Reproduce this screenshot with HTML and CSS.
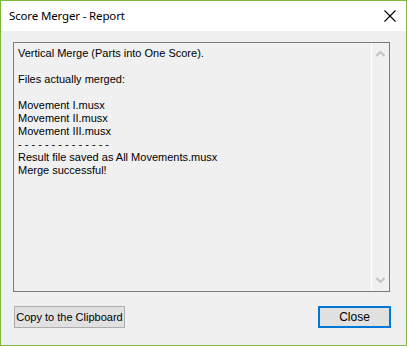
FILE: index.html
```html
<!DOCTYPE html>
<html>
<head>
<meta charset="utf-8">
<link rel="stylesheet" href="styles.css">
</head>
<body>
<div class="window">
  <div class="titlebar">
    <span class="title">Score Merger - Report</span>
    <svg class="close-x" width="12" height="12" viewBox="0 0 12 12"><path d="M0.5 0.5 L11.5 11.5 M11.5 0.5 L0.5 11.5" stroke="#000" stroke-width="1.1" fill="none"/></svg>
  </div>
  <div class="content">
    <div class="report">
      <div class="report-text">
        <div>Vertical Merge (Parts into One Score).</div>
        <div>&nbsp;</div>
        <div>Files actually merged:</div>
        <div>&nbsp;</div>
        <div>Movement I.musx</div>
        <div>Movement II.musx</div>
        <div>Movement III.musx</div>
        <div>- - - - - - - - - - - - - -</div>
        <div>Result file saved as All Movements.musx</div>
        <div>Merge successful!</div>
      </div>
      <div class="scrollbar">
        <svg class="arrow" width="9" height="6" viewBox="0 0 9 6"><path d="M0.5 5 L4.5 1 L8.5 5" stroke="#c2c2c2" stroke-width="2" fill="none"/></svg>
        <svg class="arrow" width="9" height="6" viewBox="0 0 9 6"><path d="M0.5 1 L4.5 5 L8.5 1" stroke="#c2c2c2" stroke-width="2" fill="none"/></svg>
      </div>
    </div>
    <div class="buttons">
      <button class="btn copy">Copy to the Clipboard</button>
      <button class="btn close default">Close</button>
    </div>
  </div>
</div>
</body>
</html>
```
FILE: styles.css
```css
html, body {
  margin: 0;
  padding: 0;
  background: #f0f0f0;
}
.window {
  width: 405px;
  height: 344px;
  border: 1px solid #7db83a;
  background: #f0f0f0;
  display: flex;
  flex-direction: column;
}
.titlebar {
  height: 30px;
  background: #ffffff;
  display: flex;
  align-items: center;
  justify-content: space-between;
  padding: 0 10px 0 8px;
}
.title {
  font-family: "Noto Sans", "Open Sans", sans-serif;
  font-size: 11.5px;
  letter-spacing: -0.15px;
  color: #000;
  margin-top: -1px;
}
.close-x {
  display: block;
  margin-top: -1px;
}
.content {
  padding: 11px 16px 0 12px;
  display: flex;
  flex-direction: column;
}
.report {
  height: 248px;
  border: 1px solid #7a7a7a;
  display: flex;
  background: #f0f0f0;
}
.report-text {
  flex: 1;
  padding: 4px 4px;
  font-family: "Liberation Sans", Arial, sans-serif;
  font-size: 11px;
  line-height: 13px;
  color: #000;
}
.scrollbar {
  width: 17px;
  border-left: 1px solid #ffffff;
  display: flex;
  flex-direction: column;
  justify-content: space-between;
  align-items: center;
  padding: 8px 0 8px;
}
.arrow {
  display: block;
}
.buttons {
  display: flex;
  justify-content: space-between;
  margin-top: 14px;
  padding-left: 1px;
}
.btn {
  height: 22px;
  background: #e1e1e1;
  border: 1px solid #adadad;
  font-family: "Liberation Sans", Arial, sans-serif;
  font-size: 11px;
  color: #000;
  padding: 0;
  margin: 0;
}
.copy {
  width: 111px;
}
.close {
  width: 73px;
  margin-right: -1px;
  font-size: 12px;
}
.default {
  border: 2px solid #0078d7;
}
```
